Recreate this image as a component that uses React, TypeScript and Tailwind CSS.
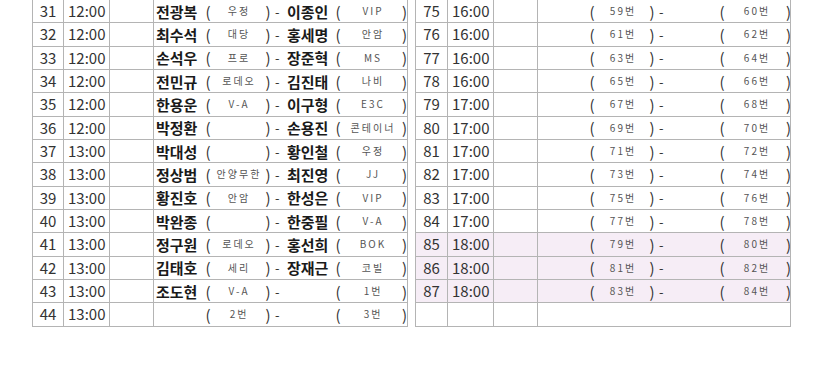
type Row = {
  no: string;
  time: string;
  a: string;
  ta: string;
  b: string;
  tb: string;
  pink?: boolean;
  blank?: boolean;
};

const left: Row[] = [
  { no: "31", time: "12:00", a: "전광복", ta: "우정", b: "이종인", tb: "VIP" },
  { no: "32", time: "12:00", a: "최수석", ta: "대당", b: "홍세명", tb: "안암" },
  { no: "33", time: "12:00", a: "손석우", ta: "프로", b: "장준혁", tb: "MS" },
  { no: "34", time: "12:00", a: "전민규", ta: "로데오", b: "김진태", tb: "나비" },
  { no: "35", time: "12:00", a: "한용운", ta: "V-A", b: "이구형", tb: "E3C" },
  { no: "36", time: "12:00", a: "박정환", ta: "", b: "손용진", tb: "콘테이너" },
  { no: "37", time: "13:00", a: "박대성", ta: "", b: "황인철", tb: "우정" },
  { no: "38", time: "13:00", a: "정상범", ta: "안양무한", b: "최진영", tb: "JJ" },
  { no: "39", time: "13:00", a: "황진호", ta: "안암", b: "한성은", tb: "VIP" },
  { no: "40", time: "13:00", a: "박완종", ta: "", b: "한중필", tb: "V-A" },
  { no: "41", time: "13:00", a: "정구원", ta: "로데오", b: "홍선희", tb: "BOK" },
  { no: "42", time: "13:00", a: "김태호", ta: "세리", b: "장재근", tb: "코빌" },
  { no: "43", time: "13:00", a: "조도현", ta: "V-A", b: "", tb: "1번" },
  { no: "44", time: "13:00", a: "", ta: "2번", b: "", tb: "3번" },
];

const times = ["16:00", "16:00", "16:00", "16:00", "17:00", "17:00", "17:00", "17:00", "17:00", "17:00", "18:00", "18:00", "18:00"];

const right: Row[] = [
  ...times.map((time, i) => ({
    no: String(75 + i),
    time,
    a: "",
    ta: `${59 + i * 2}번`,
    b: "",
    tb: `${60 + i * 2}번`,
    pink: i >= 10,
  })),
  { no: "", time: "", a: "", ta: "", b: "", tb: "", blank: true },
];

function Match({ r }: { r: Row }) {
  if (r.blank) return null;
  return (
    <div className="flex h-full items-center text-[15px] leading-none text-[#333]">
      <span className="w-[50px] shrink-0 pl-[2px] font-bold text-[#1a1a1a]">{r.a}</span>
      <span className="w-[8px] shrink-0 text-center">(</span>
      <span className="w-[52px] shrink-0 pl-[2px] text-center text-[10px] tracking-[2px] text-[#555]">{r.ta}</span>
      <span className="w-[8px] shrink-0 text-center">)</span>
      <span className="w-[12px] shrink-0 pl-[3px] text-[13px]">-</span>
      <span className="w-[50px] shrink-0 pl-[3px] font-bold text-[#1a1a1a]">{r.b}</span>
      <span className="w-[8px] shrink-0 text-center">(</span>
      <span className="w-[60px] shrink-0 pl-[2px] text-center text-[10px] tracking-[2px] text-[#555]">{r.tb}</span>
      <span className="w-[5px] shrink-0">)</span>
    </div>
  );
}

function Table({ rows, noWidth, matchWidth }: { rows: Row[]; noWidth: string; matchWidth: string }) {
  return (
    <div className="border-l border-t border-[#b4b4b4]">
      {rows.map((r, i) => (
        <div
          key={i}
          className={`flex h-[23.333px] border-b border-[#b4b4b4] ${r.pink ? "bg-[#f6edf6]" : "bg-white"}`}
        >
          <div className={`${noWidth} flex shrink-0 items-center justify-center border-r border-[#b4b4b4] text-[15px] text-[#333]`}>
            {r.no}
          </div>
          <div className="flex w-[46px] shrink-0 items-center border-r border-[#b4b4b4] pl-[4px] text-[15px] text-[#333]">
            {r.time}
          </div>
          <div className="w-[44px] shrink-0 border-r border-[#b4b4b4]" />
          <div className={`${matchWidth} shrink-0 overflow-hidden border-r border-[#b4b4b4]`}>
            <Match r={r} />
          </div>
        </div>
      ))}
    </div>
  );
}

export default function App() {
  return (
    <div className="h-[373px] w-[819px] overflow-hidden bg-white font-['Noto_Sans_CJK_KR',sans-serif]">
      <div className="mt-[-1px] flex pl-[32px]">
        <Table rows={left} noWidth="w-[31px]" matchWidth="w-[254px]" />
        <div className="w-[7px] shrink-0" />
        <Table rows={right} noWidth="w-[32px]" matchWidth="w-[253px]" />
      </div>
    </div>
  );
}
